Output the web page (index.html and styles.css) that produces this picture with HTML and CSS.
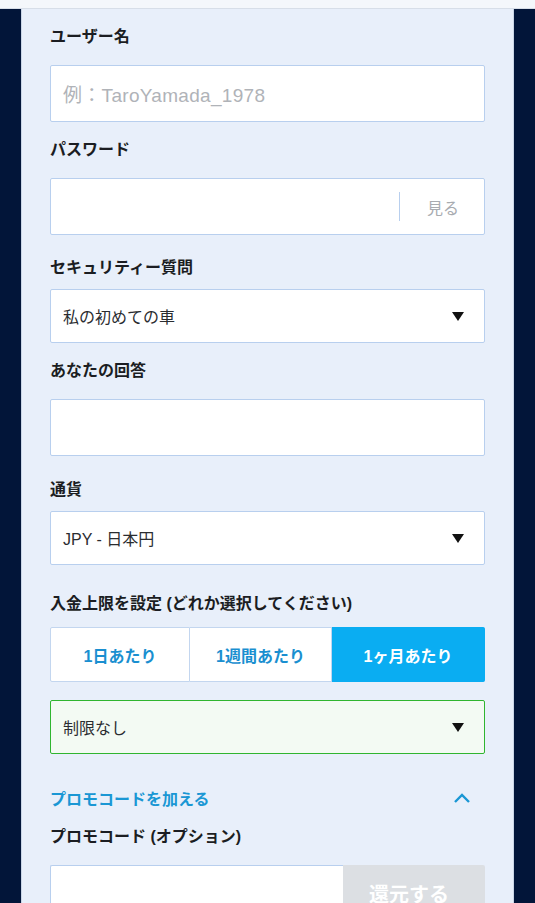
FILE: index.html
```html
<!DOCTYPE html>
<html lang="ja">

<head>
    <meta charset="utf-8">
    <title>アカウント登録</title>
    <meta name="viewport" content="width=device-width, initial-scale=1">
    <link rel="stylesheet" href="styles.css">
</head>

<body>
    <div class="topbar"></div>

    <div class="page">
        <main class="panel">

            <label class="label first">ユーザー名</label>
            <div class="field">
                <span class="placeholder">例：TaroYamada_1978</span>
            </div>

            <label class="label">パスワード</label>
            <div class="field password">
                <span class="divider"></span>
                <span class="show">見る</span>
            </div>

            <label class="label wide">セキュリティー質問</label>
            <div class="select">
                <span>私の初めての車</span>
                <svg class="caret" width="12" height="9" viewBox="0 0 12 9"><path d="M0 0 H12 L6 9 Z" fill="#111" /></svg>
            </div>

            <label class="label">あなたの回答</label>
            <div class="field"></div>

            <label class="label wide2">通貨</label>
            <div class="select">
                <span>JPY - 日本円</span>
                <svg class="caret" width="12" height="9" viewBox="0 0 12 9"><path d="M0 0 H12 L6 9 Z" fill="#111" /></svg>
            </div>

            <label class="label wide3">入金上限を設定 (どれか選択してください)</label>
            <div class="segments">
                <button class="seg">1日あたり</button>
                <button class="seg">1週間あたり</button>
                <button class="seg active">1ヶ月あたり</button>
            </div>

            <div class="select valid">
                <span>制限なし</span>
                <svg class="caret" width="12" height="9" viewBox="0 0 12 9"><path d="M0 0 H12 L6 9 Z" fill="#111" /></svg>
            </div>

            <div class="promo-toggle">
                <span>プロモコードを加える</span>
                <svg width="18" height="12" viewBox="0 0 18 12">
                    <path d="M2 10 L9 3 L16 10" fill="none" stroke="#1a97d4" stroke-width="2.4" />
                </svg>
            </div>

            <label class="label">プロモコード (オプション)</label>
            <div class="promo">
                <div class="promo-input"></div>
                <button class="redeem">還元する</button>
            </div>

        </main>
    </div>
</body>

</html>
```

FILE: styles.css
```css
body {
    margin: 0;
    padding: 0;
    background-color: #021539;
    font-family: "Liberation Sans", "Noto Sans CJK JP", sans-serif;
    color: #1b1d22;
    overflow: hidden;
}

.topbar {
    height: 8px;
    background-color: #f4f7fb;
    border-bottom: 1px solid #d7dee8;
}

.page {
    padding: 0 21px 0 21px;
}

.panel {
    display: flow-root;
    background-color: #e8effa;
    border-left: 1px solid #c9d5e6;
    border-right: 1px solid #c9d5e6;
    padding: 0 28px 40px 28px;
    min-height: 900px;
}

.label {
    display: block;
    font-size: 16px;
    line-height: 22px;
    font-weight: bold;
    margin: 17px 0 17px 0;
}

.label.first {
    margin-top: 17px;
}

.label.wide {
    margin-top: 22px;
    margin-bottom: 10px;
}

.label.wide2 {
    margin-top: 23px;
    margin-bottom: 10px;
}

.label.wide3 {
    margin-top: 28px;
    margin-bottom: 12px;
}

.field {
    height: 55px;
    background: #fff;
    border: 1px solid #b8cfee;
    border-radius: 2px;
    display: flex;
    align-items: center;
    padding: 0 12px;
}

.placeholder {
    font-size: 19px;
    letter-spacing: 0.3px;
    color: #b0b3b8;
}

.password {
    justify-content: flex-end;
    padding-right: 25px;
}

.divider {
    width: 1px;
    height: 29px;
    background-color: #b8cfee;
    margin-right: 27px;
}

.show {
    font-size: 16px;
    color: #a8abb0;
}

.select {
    height: 52px;
    background: #fff;
    border: 1px solid #b8cfee;
    border-radius: 2px;
    display: flex;
    align-items: center;
    justify-content: space-between;
    padding: 0 20px 0 12px;
    font-size: 16px;
    color: #2a2c30;
}

.select.valid {
    margin-top: 18px;
    background-color: #f3faf3;
    border-color: #2fb52f;
}

.segments {
    display: flex;
    height: 55px;
}

.seg {
    flex: 1;
    background: #fff;
    border: 1px solid #c3d6ef;
    border-left: none;
    font-family: inherit;
    font-size: 16px;
    font-weight: bold;
    color: #1a8fd0;
    padding: 0;
}

.seg:first-child {
    border-left: 1px solid #c3d6ef;
    border-radius: 2px 0 0 2px;
    flex: 0 0 140px;
}

.seg:nth-child(2) {
    flex: 0 0 142px;
}

.seg.active {
    background-color: #0aadf2;
    border-color: #0aadf2;
    color: #fff;
    border-radius: 0 2px 2px 0;
}

.promo-toggle {
    display: flex;
    justify-content: space-between;
    align-items: center;
    margin-top: 33px;
    height: 22px;
    font-size: 16px;
    font-weight: bold;
    color: #1a97d4;
    padding-right: 14px;
}

.promo {
    display: flex;
    height: 57px;
}

.promo-input {
    flex: 1;
    background: #fff;
    border: 1px solid #b8cfee;
    border-right: none;
    border-radius: 2px 0 0 2px;
}

.redeem {
    flex: 0 0 142px;
    background-color: #dcdfe3;
    border: none;
    border-radius: 0 2px 2px 0;
    color: #fff;
    font-family: inherit;
    font-size: 20px;
    font-weight: bold;
    padding: 0 10px 0 0;
}
```
